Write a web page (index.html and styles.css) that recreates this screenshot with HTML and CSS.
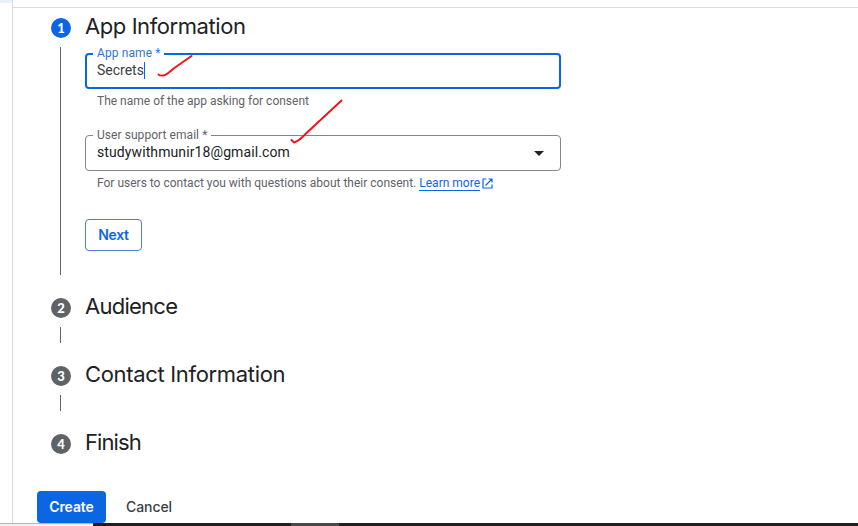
FILE: index.html
```html
<!DOCTYPE html>
<html lang="en">
<head>
<meta charset="utf-8">
<title>App Information</title>
<link rel="stylesheet" href="styles.css">
</head>
<body>
<div class="page">
  <aside class="sidebar"><div class="sidebar-item"></div></aside>
  <main class="content">
    <ol class="steps">
      <li class="step">
        <div class="rail"><span class="badge active">1</span><span class="line"></span></div>
        <div class="step-body">
          <h2 class="title t-app">App Information</h2>
          <fieldset class="field focused">
            <legend>App name *</legend>
            <div class="value">Secrets<span class="caret"></span></div>
          </fieldset>
          <p class="hint">The name of the app asking for consent</p>
          <fieldset class="field">
            <legend>User support email *</legend>
            <div class="value"><span class="email">studywithmunir18@gmail.com</span><span class="arrow"></span></div>
          </fieldset>
          <p class="hint">For users to contact you with questions about their consent. <a class="link">Learn more</a><svg class="external" viewBox="0 0 11 11"><path d="M4.500 1H1v9h9V6.500M6.500 1H10v3.500M10 1 3.500 7.500"/></svg></p>
          <button class="btn next">Next</button>
        </div>
      </li>
      <li class="step">
        <div class="rail"><span class="badge">2</span><span class="line"></span></div>
        <h2 class="title t-audience">Audience</h2>
      </li>
      <li class="step">
        <div class="rail"><span class="badge">3</span><span class="line"></span></div>
        <h2 class="title t-contact">Contact Information</h2>
      </li>
      <li class="step last">
        <div class="rail"><span class="badge">4</span></div>
        <h2 class="title t-finish">Finish</h2>
      </li>
    </ol>
    <div class="actions">
      <button class="btn create">Create</button>
      <button class="btn cancel">Cancel</button>
    </div>
  </main>
</div>
<footer class="taskbar"><span class="search"></span><span class="dark"></span><span class="open"></span></footer>
<svg class="marks" viewBox="0 0 858 526">
  <path d="M158.500 74.500Q161 76.500 165 75Q168 73.500 173 69Q180 64 191.500 56"/>
  <path d="M291.500 140 294 142.500Q299 141 306 133.500L341.500 100.500"/>
</svg>
</body>
</html>
```
FILE: styles.css
```css
* { box-sizing: border-box; }
body {
  margin: 0;
  height: 526px;
  overflow: hidden;
  background: #fff;
  color: #202124;
  font-family: Roboto, sans-serif;
  display: flex;
  flex-direction: column;
}
.page { display: flex; height: 523px; }
.sidebar { width: 13px; border-right: 1px solid #dadce0; }
.sidebar-item { height: 3px; background: #e8f0fe; }
.content {
  flex: 1;
  margin-top: 7px;
  border-top: 1px solid #dadce0;
  padding: 10px 0 0 24px;
}
.steps { list-style: none; margin: 0; padding: 0 0 0 14px; }
.step { display: flex; height: 68px; }
.step:first-child { height: 280px; }
.step.last { height: 57px; }
.rail {
  width: 20px;
  margin-right: 14px;
  padding-bottom: 23px;
  display: flex;
  flex-direction: column;
  gap: 9px;
}
.badge {
  flex: none;
  height: 20px;
  border-radius: 50%;
  background: #5f6368;
  color: #fff;
  font: 900 13px/20px Lato, sans-serif;
  text-align: center;
}
.badge.active { background: #0b66e4; }
.line { flex: 1; width: 1px; margin-left: 9px; background: #5f6368; }
.step-body { width: 476px; }
.title {
  margin: -6px 0 0;
  font: 400 22px/28px Inter, sans-serif;
  white-space: nowrap;
}
.t-app { letter-spacing: -0.42px; }
.t-audience { letter-spacing: -0.75px; }
.t-contact { letter-spacing: -0.33px; }
.t-finish { letter-spacing: -0.9px; }
.field {
  height: 36px;
  min-width: 0;
  margin: 13px 0 0;
  padding: 0;
  border: 1px solid #80868b;
  border-radius: 4px;
}
.field.focused { border: 2px solid #0b66e4; }
.field legend {
  height: 1px;
  margin-left: 7px;
  padding: 0 4px;
  color: #5f6368;
  font-size: 12px;
  line-height: 1px;
  letter-spacing: 0.06px;
}
.field.focused legend { height: 2px; margin-left: 6px; color: #2f76db; line-height: 0; letter-spacing: 0.1px; }
.hint + .field { margin-top: 26px; }
.value {
  display: flex;
  align-items: center;
  height: 32px;
  padding: 0 16px 0 11px;
  font-size: 14px;
}
.focused .value { height: 30px; padding-left: 10px; color: #3c4043; }
.email { letter-spacing: 0.1px; }
.caret { width: 1px; height: 17px; background: #0b66e4; }
.arrow {
  margin: 2px 0 0 auto;
  border: 5px solid transparent;
  border-top-color: #202124;
  border-bottom: 0;
}
.hint {
  display: flex;
  align-items: center;
  height: 16px;
  margin: 4px 0 0 12px;
  color: #5f6368;
  font-size: 12px;
  line-height: 16px;
  white-space: nowrap;
}
.link { margin-left: 3px; line-height: 14px; color: #0b66e4; border-bottom: 1px solid #0b66e4; }
.external { width: 11px; height: 11px; margin-left: 2px; fill: none; stroke: #0b66e4; stroke-width: 1.2; }
.btn {
  height: 32px;
  padding: 0;
  border: 0;
  border-radius: 4px;
  background: none;
  color: #3c4043;
  font: 500 14px/30px Inter, sans-serif;
  letter-spacing: -0.1px;
}
.next { display: block; width: 57px; margin-top: 28px; border: 1px solid #4c80ce; color: #0b66e4; font-weight: 600; letter-spacing: -0.3px; }
.actions { display: flex; gap: 20px; }
.create { width: 69px; background: #0b66e4; color: #fff; font-weight: 600; }
.cancel { width: 46px; }
.taskbar { display: flex; height: 3px; background: #202020; }
.search { width: 93px; background: #f2f2f2; border-top: 1px solid #b5b5b5; }
.dark { width: 198px; }
.open { width: 48px; background: #4b4849; }
.marks {
  position: absolute;
  inset: 0;
  width: 858px;
  height: 526px;
  fill: none;
  stroke: #f01218;
  stroke-width: 1.9;
  stroke-linecap: round;
  pointer-events: none;
}
```
